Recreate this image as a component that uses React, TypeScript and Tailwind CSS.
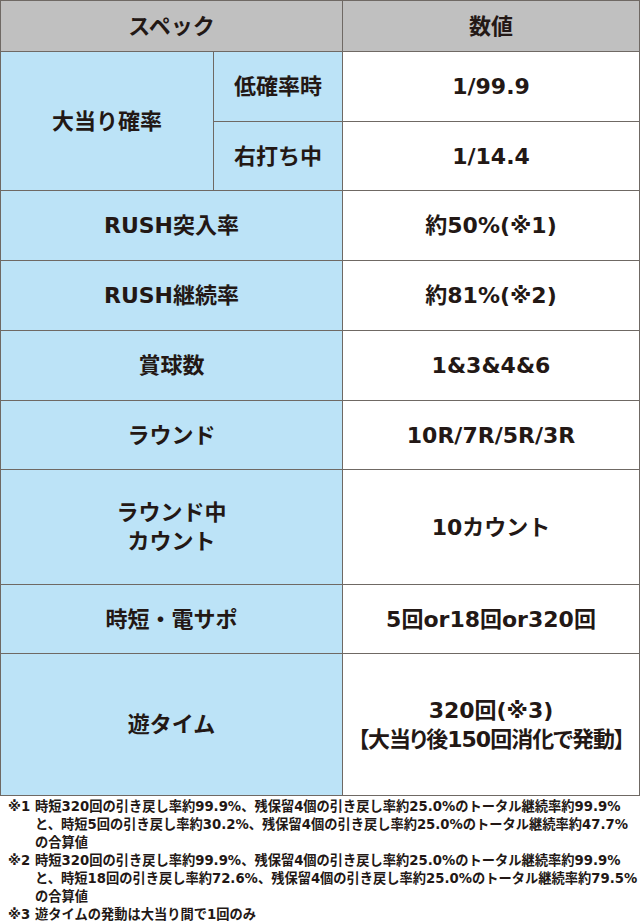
import React from "react";

type Row = {
    label: string[];
    value: string[];
    height: string;
};

const rows: Row[] = [
    { label: ["RUSH突入率"], value: ["約50%(※1)"], height: "h-[70px]" },
    { label: ["RUSH継続率"], value: ["約81%(※2)"], height: "h-[70px]" },
    { label: ["賞球数"], value: ["1&3&4&6"], height: "h-[70px]" },
    { label: ["ラウンド"], value: ["10R/7R/5R/3R"], height: "h-[69px]" },
    { label: ["ラウンド中", "カウント"], value: ["10カウント"], height: "h-[115px]" },
    { label: ["時短・電サポ"], value: ["5回or18回or320回"], height: "h-[69px]" },
    { label: ["遊タイム"], value: ["320回(※3)", "【大当り後150回消化で発動】"], height: "h-[142px]" },
];

const notes = [
    {
        mark: "※1",
        lines: [
            "時短320回の引き戻し率約99.9%、残保留4個の引き戻し率約25.0%のトータル継続率約99.9%",
            "と、時短5回の引き戻し率約30.2%、残保留4個の引き戻し率約25.0%のトータル継続率約47.7%",
            "の合算値",
        ],
    },
    {
        mark: "※2",
        lines: [
            "時短320回の引き戻し率約99.9%、残保留4個の引き戻し率約25.0%のトータル継続率約99.9%",
            "と、時短18回の引き戻し率約72.6%、残保留4個の引き戻し率約25.0%のトータル継続率約79.5%",
            "の合算値",
        ],
    },
    { mark: "※3", lines: ["遊タイムの発動は大当り間で1回のみ"] },
];

const cell = "border border-[#6f6964] p-0 text-center align-middle";

export default function App() {
    return (
        <div className="w-[640px] bg-white text-[#231815] font-['DejaVu_Sans','Noto_Sans_CJK_JP',sans-serif] font-bold">
            <table className="w-[640px] border-collapse table-fixed">
                <colgroup>
                    <col className="w-[213px]" />
                    <col className="w-[129px]" />
                    <col />
                </colgroup>
                <tbody>
                    {/* header */}
                    <tr className="h-[51px] bg-[#c0c0c0] text-[22px]">
                        <td colSpan={2} className={cell}>スペック</td>
                        <td className={cell}>数値</td>
                    </tr>

                    {/* 大当り確率 */}
                    <tr className="h-[70px] text-[22px]">
                        <td rowSpan={2} className={`${cell} bg-[#bce3f7]`}>大当り確率</td>
                        <td className={`${cell} bg-[#bce3f7]`}>低確率時</td>
                        <td className={cell}>1/99.9</td>
                    </tr>
                    <tr className="h-[69px] text-[22px]">
                        <td className={`${cell} bg-[#bce3f7]`}>右打ち中</td>
                        <td className={cell}>1/14.4</td>
                    </tr>

                    {rows.map((row, i) => (
                        <tr key={i} className={`${row.height} text-[22px] leading-[29px]`}>
                            <td colSpan={2} className={`${cell} bg-[#bce3f7]`}>
                                {row.label.map((l, j) => (
                                    <div key={j}>{l}</div>
                                ))}
                            </td>
                            <td className={cell}>
                                {row.value.map((v, j) => (
                                    <div
                                        key={j}
                                        className={
                                            v.startsWith("【")
                                                ? "whitespace-nowrap tracking-[-1px] [font-feature-settings:'palt']"
                                                : "whitespace-nowrap"
                                        }
                                    >
                                        {v}
                                    </div>
                                ))}
                            </td>
                        </tr>
                    ))}
                </tbody>
            </table>

            {/* footnotes */}
            <div className="mt-[2px] pl-[8px] text-[13.25px] leading-[18px]">
                {notes.map((n) => (
                    <div key={n.mark} className="flex">
                        <div className="w-[27px] shrink-0">{n.mark}</div>
                        <div>
                            {n.lines.map((l, j) => (
                                <div key={j} className="whitespace-nowrap">{l}</div>
                            ))}
                        </div>
                    </div>
                ))}
            </div>
        </div>
    );
}
